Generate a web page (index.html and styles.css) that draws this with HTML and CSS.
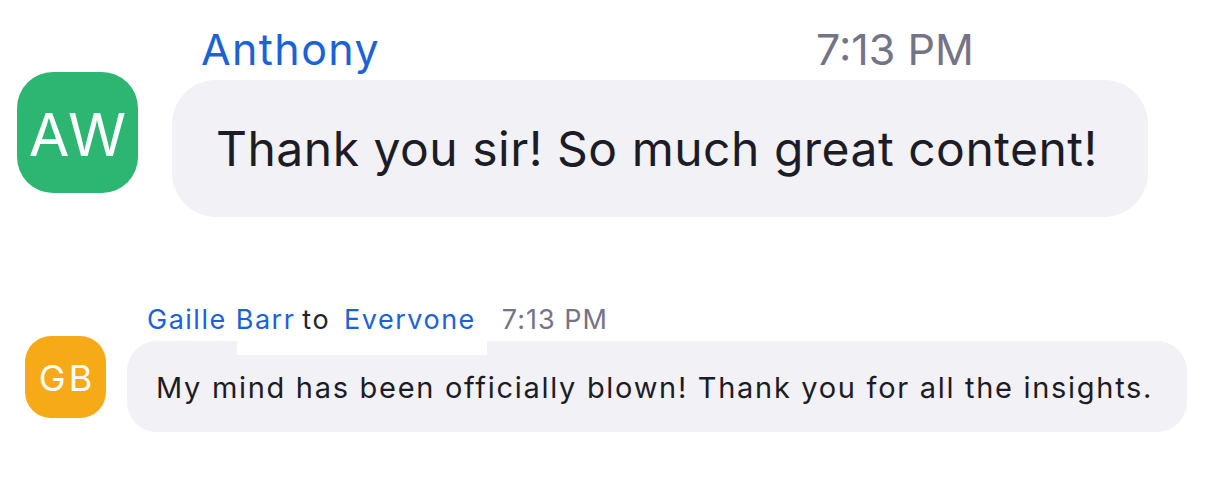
FILE: index.html
```html
<!DOCTYPE html>
<html lang="en">
<head>
<meta charset="utf-8">
<title>Chat</title>
<link rel="stylesheet" href="styles.css">
</head>
<body>
<div class="chat">
  <div class="msg msg-large">
    <div class="avatar avatar-green">AW</div>
    <div class="msg-body">
      <div class="msg-head">
        <span class="name">Anthony</span>
        <span class="time">7:13 PM</span>
      </div>
      <div class="bubble">Thank you sir! So much great content!</div>
    </div>
  </div>
  <div class="msg msg-small">
    <div class="avatar avatar-orange">GB</div>
    <div class="msg-body">
      <div class="msg-head">
        <span class="name">Gaille Barr</span>
        <span class="to">to</span>
        <span class="name recipient">Evervone</span>
        <span class="time">7:13 PM</span>
      </div>
      <div class="bubble">My mind has been officially blown! Thank you for all the insights.<span class="patch"></span></div>
    </div>
  </div>
</div>
</body>
</html>
```
FILE: styles.css
```css
html, body {
  margin: 0;
  padding: 0;
  background: #ffffff;
}
body {
  font-family: Inter, "Noto Sans", "Liberation Sans", sans-serif;
  color: #1c1c26;
}
.chat {
  display: flex;
  flex-direction: column;
  padding-top: 23px;
}
.msg {
  display: flex;
  align-items: flex-start;
}
.avatar {
  display: flex;
  align-items: center;
  justify-content: center;
  box-sizing: border-box;
  color: #ffffff;
  flex: none;
}
.avatar-green {
  background: #2db672;
}
.avatar-orange {
  background: #f6aa17;
}
.name {
  color: #1b62d6;
}
.time {
  color: #747486;
}
.to {
  color: #23232f;
}
.msg-head {
  display: flex;
  align-items: baseline;
  white-space: nowrap;
}
.bubble {
  position: relative;
  background: #f1f1f6;
  box-sizing: border-box;
  white-space: nowrap;
}

/* large message */
.msg-large {
  padding-left: 17px;
}
.msg-large .avatar {
  width: 121px;
  height: 121px;
  border-radius: 36px;
  margin-top: 49px;
  padding: 4px 0 0 2px;
  font-size: 59px;
  letter-spacing: 2px;
}
.msg-large .msg-body {
  margin-left: 34px;
}
.msg-large .msg-head {
  font-size: 43px;
  line-height: 52px;
  padding-left: 29px;
}
.msg-large .name {
  letter-spacing: 1.4px;
}
.msg-large .time {
  margin-left: 436px;
}
.msg-large .bubble {
  margin-top: 5px;
  width: 976px;
  padding: 40px 0 39px 44px;
  font-size: 48px;
  line-height: 58px;
  letter-spacing: 0.5px;
  border-radius: 44px;
}

/* small message */
.msg-small {
  margin-top: 87px;
  padding-left: 25px;
}
.msg-small .avatar {
  width: 81px;
  height: 82px;
  border-radius: 26px;
  margin-top: 32px;
  padding: 2px 0 0 3px;
  font-size: 36px;
  letter-spacing: 3px;
}
.msg-small .msg-body {
  margin-left: 21px;
}
.msg-small .msg-head {
  font-size: 27px;
  line-height: 32px;
  padding-left: 20px;
  letter-spacing: 1.5px;
}
.msg-small .to {
  margin-left: 7px;
}
.msg-small .recipient {
  margin-left: 14px;
}
.msg-small .time {
  margin-left: 26px;
  letter-spacing: 1px;
}
.msg-small .bubble {
  margin-top: 5px;
  width: 1060px;
  padding: 30px 0 27px 29px;
  font-size: 29px;
  line-height: 34px;
  letter-spacing: 1.7px;
  border-radius: 30px;
}
.patch {
  position: absolute;
  left: 110px;
  top: 0;
  width: 250px;
  height: 14px;
  background: #ffffff;
}
```
